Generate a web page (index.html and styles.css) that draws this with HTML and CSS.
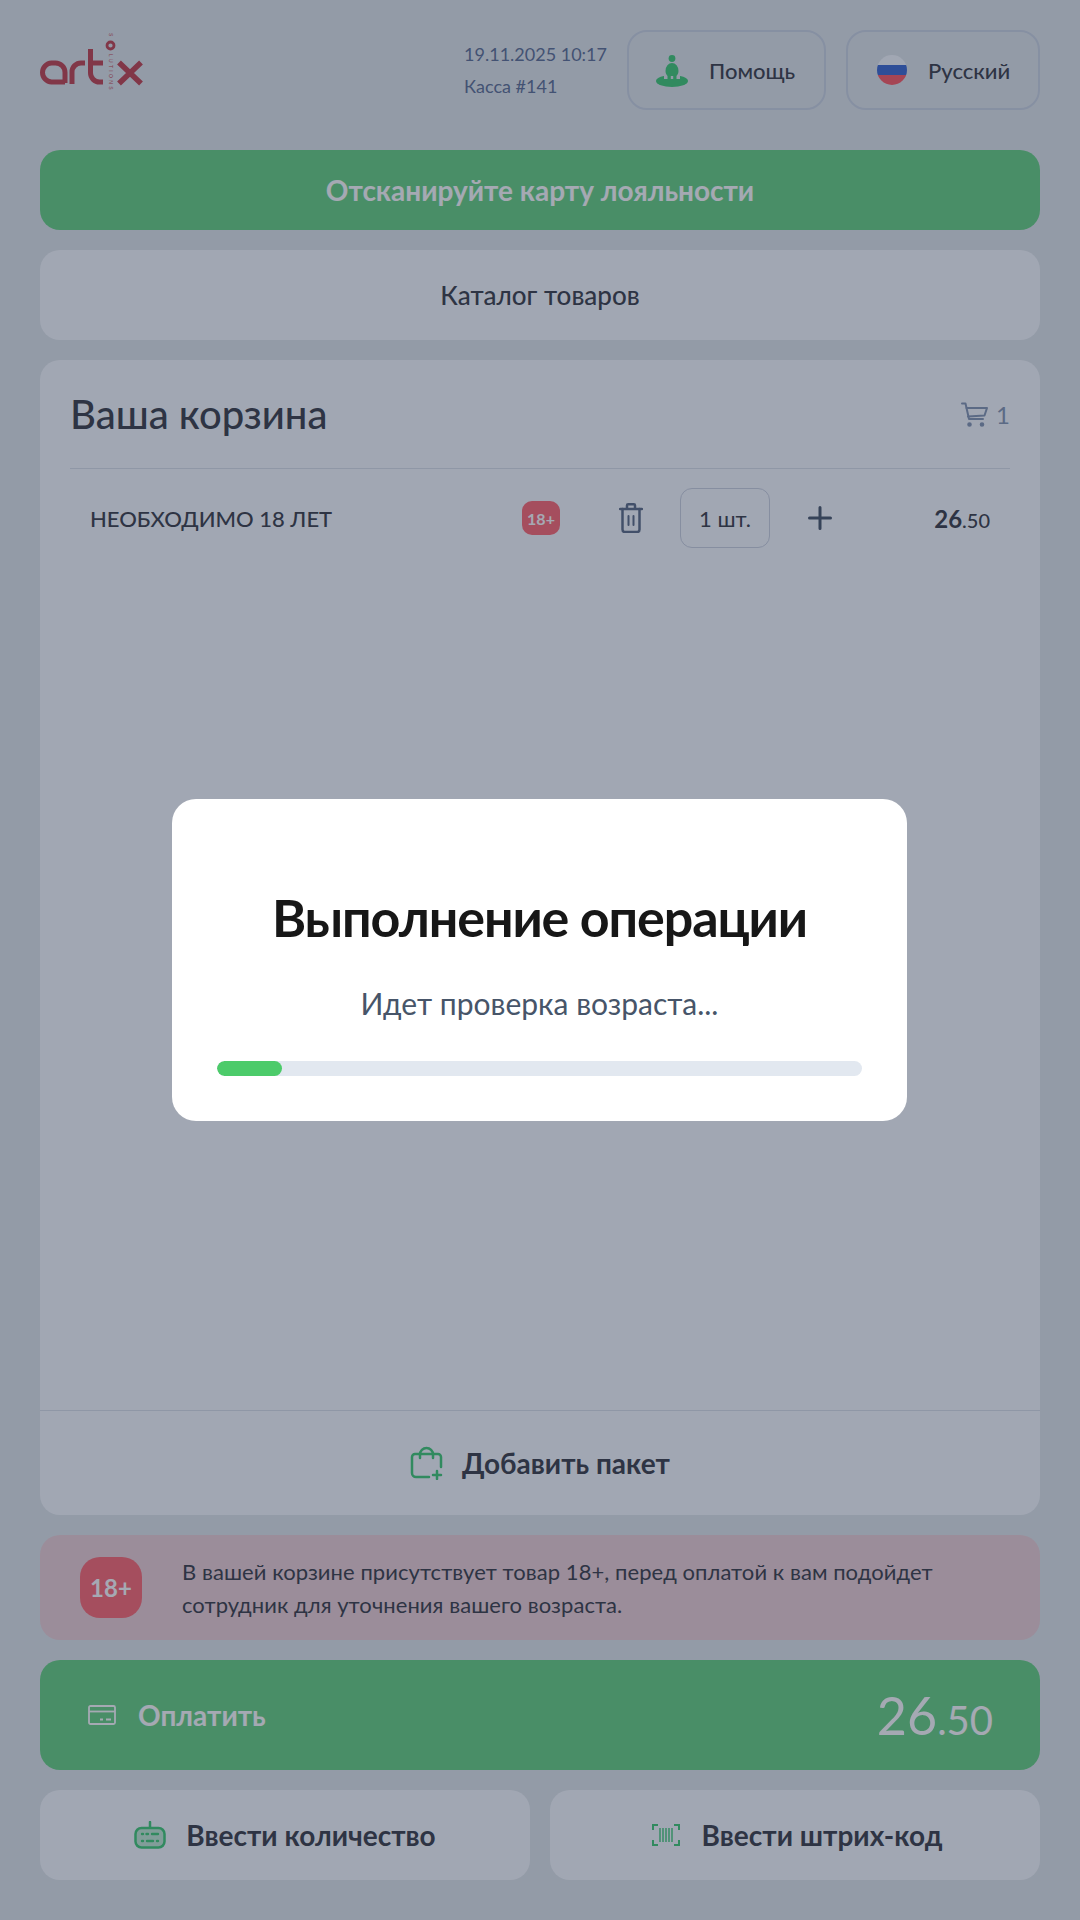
FILE: index.html
```html
<!DOCTYPE html>
<html lang="ru">
<head>
    <meta charset="UTF-8">
    <meta name="viewport" content="width=device-width, initial-scale=1.0">
    <title>Касса</title>
    <link rel="stylesheet" href="styles.css">
</head>
<body>
    <div class="page">
        <div class="header">
            <svg class="logo" width="104" height="76" viewBox="40 33 104 76" fill="none" stroke="#c4424e" stroke-width="5" role="img" aria-label="artix solutions">
                <path d="M65 84V73.500A9.500 9.500 0 0 0 55.500 64H51.500A9.500 9.500 0 0 0 42.500 73.500V73.500A9.500 9.500 0 0 0 51.500 83H65"/>
                <path d="M72 85V73A9 9 0 0 1 81 64H85"/>
                <path d="M90.500 50V74A9 9 0 0 0 99.500 83H103M88 64H103"/>
                <circle cx="110.500" cy="46.500" r="3.500" stroke-width="2.800"/>
                <path d="M119 63.500L141 84.500M141 63.500L119 84.500" stroke-width="5.500"/>
                <text class="logo-sub" transform="translate(109 34) rotate(90)">S</text>
                <text class="logo-sub" transform="translate(109 55) rotate(90)">LUTIONS</text>
            </svg>
            <div class="till-info">
                <div>19.11.2025 10:17</div>
                <div>Касса #141</div>
            </div>
            <div class="top-btn help-btn">
                <svg width="34" height="34" viewBox="0 0 34 34">
                    <circle cx="17" cy="5.500" r="3.400" fill="#3ecb74"/>
                    <ellipse cx="17" cy="28" rx="16" ry="6" fill="#3ecb74"/>
                    <path d="M9 26V17A8 8 0 0 1 25 17V26" fill="#e2e8ec"/>
                    <path d="M10.500 18A6.500 8 0 0 1 23.500 18C23.500 21 22 22 21.500 23V28H18.200V23H15.800V28H12.500V23C12 22 10.500 21 10.500 18Z" fill="#3ecb74"/>
                </svg>
                <span>Помощь</span>
            </div>
            <div class="top-btn lang-btn">
                <div class="flag">
                    <div class="flag-white"></div>
                    <div class="flag-blue"></div>
                    <div class="flag-red"></div>
                </div>
                <span>Русский</span>
            </div>
        </div>

        <div class="loyalty">Отсканируйте карту лояльности</div>
        <div class="catalog">Каталог товаров</div>

        <div class="cart">
            <div class="cart-head">
                <h2>Ваша корзина</h2>
                <div class="cart-count">
                    <svg width="27" height="25" viewBox="0 0 27 25" fill="none" stroke="#8496b3" stroke-width="2" stroke-linecap="round" stroke-linejoin="round">
                        <path d="M1 1.500H4.500L8 17H22"/>
                        <path d="M5.500 6H26L23.500 13.500L7 14.500"/>
                        <circle cx="8.500" cy="22.500" r="1.300" fill="#8496b3"/>
                        <circle cx="21" cy="22.500" r="1.300" fill="#8496b3"/>
                    </svg>
                    <span>1</span>
                </div>
            </div>
            <div class="cart-list">
                <div class="cart-row">
                    <div class="item-name">НЕОБХОДИМО 18 ЛЕТ</div>
                    <div class="age-small">18+</div>
                    <svg class="trash" width="24" height="30" viewBox="0 0 24 30" fill="none" stroke="#5b6b85" stroke-width="2.500" stroke-linecap="round" stroke-linejoin="round">
                        <path d="M1 6H23M8 6V2.500A1.200 1.200 0 0 1 9.200 1.300H14.800A1.200 1.200 0 0 1 16 2.500V6"/>
                        <path d="M3.500 6V26.500A2.500 2.500 0 0 0 6 29H18A2.500 2.500 0 0 0 20.500 26.500V6"/>
                        <path d="M9.500 13V22M14.500 13V22" stroke-width="2"/>
                    </svg>
                    <div class="qty">1 шт.</div>
                    <svg class="plus" width="24" height="24" viewBox="0 0 24 24" fill="none" stroke="#475569" stroke-width="3" stroke-linecap="round">
                        <path d="M12 1.500V22.500M1.500 12H22.500"/>
                    </svg>
                    <div class="item-price">26<small>.50</small></div>
                </div>
            </div>
            <div class="cart-foot">
                <svg width="34" height="34" viewBox="0 0 34 34" fill="none" stroke="#3ecb74" stroke-width="2.500" stroke-linecap="round" stroke-linejoin="round">
                    <path d="M19 31H6A4 4 0 0 1 2 27V11A3 3 0 0 1 5 8H28A3 3 0 0 1 31 11V21"/>
                    <path d="M10 12V8.500A6.500 6.500 0 0 1 23 8.500V12"/>
                    <path d="M27 25V33M23 29H31"/>
                </svg>
                <span>Добавить пакет</span>
            </div>
        </div>

        <div class="age-note">
            <div class="age-big">18+</div>
            <p>В вашей корзине присутствует товар 18+, перед оплатой к вам подойдет сотрудник для уточнения вашего возраста.</p>
        </div>

        <div class="pay">
            <svg width="28" height="20" viewBox="0 0 28 20" fill="none" stroke="#fff" stroke-width="1.800">
                <rect x="1" y="1" width="26" height="18" rx="1.500"/>
                <path d="M1 6.500H27"/>
                <path d="M12 14.500H15M18 14.500H23" stroke-width="2"/>
            </svg>
            <div class="pay-label">Оплатить</div>
            <div class="pay-sum">26<small>.50</small></div>
        </div>

        <div class="bottom-btns">
            <div class="bottom-btn">
                <svg width="32" height="28" viewBox="0 0 32 28" fill="none" stroke="#3ecb74" stroke-width="2.500" stroke-linecap="round">
                    <path d="M16 1V7"/>
                    <rect x="1.500" y="7" width="29" height="19.500" rx="6" fill="#c4ecd4"/>
                    <path d="M8 13H9M12.500 13H14M18 13H24M8 20H9M13 20H19M23 20H24" stroke-width="2.400"/>
                </svg>
                <span>Ввести количество</span>
            </div>
            <div class="bottom-btn barcode-btn">
                <svg class="barcode" width="28" height="22" viewBox="0 0 28 22" fill="none" stroke="#3ecb74" stroke-width="2">
                    <path d="M6 1H1V6M22 1H27V6M6 21H1V16M22 21H27V16"/>
                    <path d="M8 4V18M11 4V18M14 4V18M17 4V18M20 4V18" stroke-width="1.400"/>
                </svg>
                <span>Ввести штрих-код</span>
            </div>
        </div>
    </div>

    <div class="overlay">
        <div class="modal">
            <h1>Выполнение операции</h1>
            <p>Идет проверка возраста...</p>
            <div class="progress">
                <div class="progress-fill" style="width: 10%"></div>
            </div>
        </div>
    </div>
</body>
</html>
```

FILE: styles.css
```css
* {
    box-sizing: border-box;
}

body {
    margin: 0;
    font-family: 'Lato', 'Liberation Sans', sans-serif;
    background-color: #e2e8ec;
    color: #393c46;
}

.page {
    height: 1920px;
    padding: 30px 40px 40px;
    display: flex;
    flex-direction: column;
    gap: 20px;
}

.header {
    height: 80px;
    margin-bottom: 20px;
    display: flex;
    align-items: center;
    gap: 20px;
}

.logo {
    margin-right: auto;
}

.logo-sub {
    font-family: 'Liberation Sans', sans-serif;
    font-size: 5px;
    letter-spacing: 2.300px;
    fill: #c4424e;
    stroke: none;
}

.till-info {
    font-size: 18px;
    line-height: 32px;
    color: #5c6f94;
}

.top-btn {
    height: 80px;
    display: flex;
    align-items: center;
    border: 2px solid #ccd5e3;
    border-radius: 20px;
    font-size: 22px;
    font-weight: 500;
}

.help-btn {
    width: 199px;
    padding-left: 26px;
    gap: 20px;
}

.lang-btn {
    width: 194px;
    padding-left: 29px;
    gap: 21px;
}

.flag {
    width: 30px;
    height: 30px;
    border-radius: 50%;
    overflow: hidden;
    display: flex;
    flex-direction: column;
}

.flag-white {
    flex: 1;
    background-color: #f9fcff;
}

.flag-blue {
    flex: 1;
    background-color: #3968d3;
}

.flag-red {
    flex: 1;
    background-color: #ff5962;
}

.loyalty {
    height: 80px;
    display: flex;
    align-items: center;
    justify-content: center;
    background-color: #67d381;
    border-radius: 20px;
    font-size: 28px;
    font-weight: 700;
    color: #fff;
}

.catalog {
    height: 90px;
    display: flex;
    align-items: center;
    justify-content: center;
    background-color: #f9fcff;
    border-radius: 20px;
    font-size: 26px;
    font-weight: 500;
}

.cart {
    flex: 1;
    display: flex;
    flex-direction: column;
    background-color: #f9fcff;
    border-radius: 20px;
}

.cart-head {
    height: 109px;
    margin: 0 30px;
    display: flex;
    align-items: center;
    justify-content: space-between;
    border-bottom: 1px solid #dbe1ea;
}

.cart-head h2 {
    margin: 0;
    font-size: 40px;
    font-weight: 500;
}

.cart-count {
    display: flex;
    align-items: center;
    gap: 8px;
    font-size: 24px;
    color: #8496b3;
}

.cart-list {
    flex: 1;
    padding: 0 50px;
}

.cart-row {
    height: 98px;
    display: flex;
    align-items: center;
}

.item-name {
    flex: 1;
    font-size: 22px;
    font-weight: 500;
}

.age-small {
    width: 38px;
    height: 34px;
    display: flex;
    align-items: center;
    justify-content: center;
    background-color: #ff6872;
    border-radius: 10px;
    font-size: 16px;
    font-weight: 700;
    color: #fff;
}

.trash {
    margin-left: 59px;
}

.qty {
    width: 90px;
    height: 60px;
    margin-left: 37px;
    display: flex;
    align-items: center;
    justify-content: center;
    border: 1px solid #cbd2e0;
    border-radius: 12px;
    font-size: 22px;
}

.plus {
    margin-left: 38px;
}

.item-price {
    width: 158px;
    text-align: right;
    font-size: 24px;
    font-weight: 700;
}

.item-price small {
    font-size: 20px;
    font-weight: 500;
}

.cart-foot {
    height: 105px;
    display: flex;
    align-items: center;
    justify-content: center;
    gap: 18px;
    border-top: 1px solid #dbe1ea;
    font-size: 28px;
    font-weight: 700;
}

.age-note {
    height: 105px;
    padding: 0 40px;
    display: flex;
    align-items: center;
    gap: 40px;
    background-color: #eed1d5;
    border-radius: 20px;
}

.age-big {
    width: 62px;
    height: 61px;
    flex-shrink: 0;
    display: flex;
    align-items: center;
    justify-content: center;
    background-color: #ff6872;
    border-radius: 20px;
    font-size: 24px;
    font-weight: 700;
    color: #fff;
}

.age-note p {
    margin: 0;
    font-size: 22px;
    line-height: 33px;
    letter-spacing: 0.060px;
}

.pay {
    height: 110px;
    padding: 0 47px 0 48px;
    display: flex;
    align-items: center;
    background-color: #67d381;
    border-radius: 20px;
    color: #fff;
}

.pay-label {
    flex: 1;
    margin-left: 22px;
    font-size: 28px;
    font-weight: 700;
}

.pay-sum {
    font-size: 52px;
}

.pay-sum small {
    font-size: 40px;
}

.bottom-btns {
    display: grid;
    grid-template-columns: 1fr 1fr;
    gap: 20px;
}

.bottom-btn {
    height: 90px;
    display: flex;
    align-items: center;
    justify-content: center;
    gap: 20px;
    background-color: #f9fcff;
    border-radius: 20px;
    font-size: 28px;
    font-weight: 700;
}

.barcode-btn {
    padding-left: 4px;
}

.barcode {
    margin-right: 2px;
}

.overlay {
    position: fixed;
    inset: 0;
    padding-right: 1px;
    display: flex;
    align-items: center;
    justify-content: center;
    background-color: rgba(30, 41, 66, 0.4);
}

.modal {
    width: 735px;
    height: 322px;
    padding: 0 45px;
    background-color: #fff;
    border-radius: 24px;
    text-align: center;
}

.modal h1 {
    margin: 88px 0 0;
    font-size: 52px;
    line-height: 60px;
    letter-spacing: -1.100px;
    font-weight: 700;
    color: #171717;
}

.modal p {
    margin: 38px 0 0;
    font-size: 30px;
    line-height: 36px;
    color: #475569;
}

.progress {
    height: 15px;
    margin-top: 40px;
    background-color: #e2e8f0;
    border-radius: 8px;
    overflow: hidden;
}

.progress-fill {
    height: 100%;
    background-color: #4ccb6a;
    border-radius: 8px;
}
```
